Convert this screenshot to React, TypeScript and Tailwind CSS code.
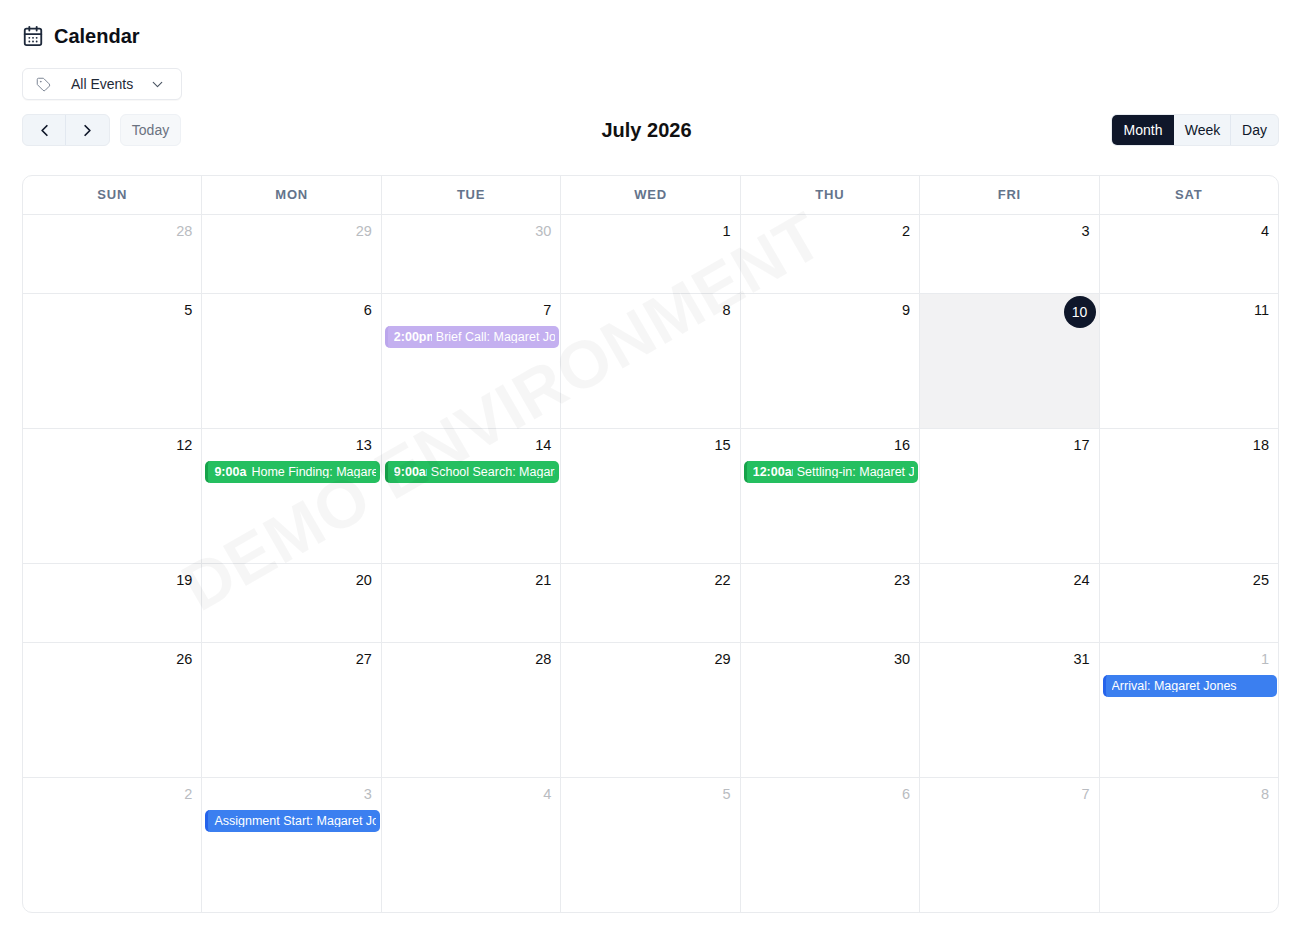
import { CalendarDays, ChevronDown, ChevronLeft, ChevronRight, Tag } from 'lucide-react';

type CalEvent = { time?: string; timeWidth?: string; title: string; tone: 'purple' | 'green' | 'blue' };
type Day = { n: number; muted?: boolean; today?: boolean; event?: CalEvent };

const headers = ['SUN', 'MON', 'TUE', 'WED', 'THU', 'FRI', 'SAT'];

const weeks: { height: string; days: Day[] }[] = [
  { height: 'h-[79px]', days: [{ n: 28, muted: true }, { n: 29, muted: true }, { n: 30, muted: true }, { n: 1 }, { n: 2 }, { n: 3 }, { n: 4 }] },
  {
    height: 'h-[135px]',
    days: [
      { n: 5 },
      { n: 6 },
      { n: 7, event: { time: '2:00pm', timeWidth: 'w-[38px]', title: 'Brief Call: Magaret Jones', tone: 'purple' } },
      { n: 8 },
      { n: 9 },
      { n: 10, today: true },
      { n: 11 },
    ],
  },
  {
    height: 'h-[135px]',
    days: [
      { n: 12 },
      { n: 13, event: { time: '9:00am', timeWidth: 'w-[33px]', title: 'Home Finding: Magaret Jones', tone: 'green' } },
      { n: 14, event: { time: '9:00am', timeWidth: 'w-[33px]', title: 'School Search: Magaret Jones', tone: 'green' } },
      { n: 15 },
      { n: 16, event: { time: '12:00am', timeWidth: 'w-[40px]', title: 'Settling-in: Magaret Jones', tone: 'green' } },
      { n: 17 },
      { n: 18 },
    ],
  },
  { height: 'h-[79px]', days: [{ n: 19 }, { n: 20 }, { n: 21 }, { n: 22 }, { n: 23 }, { n: 24 }, { n: 25 }] },
  {
    height: 'h-[135px]',
    days: [
      { n: 26 },
      { n: 27 },
      { n: 28 },
      { n: 29 },
      { n: 30 },
      { n: 31 },
      { n: 1, muted: true, event: { title: 'Arrival: Magaret Jones', tone: 'blue' } },
    ],
  },
  {
    height: 'h-[134px]',
    days: [
      { n: 2, muted: true },
      { n: 3, muted: true, event: { title: 'Assignment Start: Magaret Jones', tone: 'blue' } },
      { n: 4, muted: true },
      { n: 5, muted: true },
      { n: 6, muted: true },
      { n: 7, muted: true },
      { n: 8, muted: true },
    ],
  },
];

const toneClass = {
  purple: 'bg-[#c4b0f0] border-[#bba6ec] text-white',
  green: 'bg-[#25bf60] border-[#16a34a] text-white',
  blue: 'bg-[#3b7ff0] border-[#2563eb] text-white',
};

function EventChip({ event }: { event: CalEvent }) {
  return (
    <div className={`ml-[3px] mr-[1px] mt-[7px] flex h-[22px] items-center overflow-hidden rounded-[5px] border-l-[3px] pl-[6px] pr-[4px] text-[12.5px] leading-none whitespace-nowrap ${toneClass[event.tone]}`}>
      <div className="flex min-w-0 flex-1 overflow-hidden">
        {event.time && <span className={`mr-[4px] shrink-0 overflow-hidden font-bold ${event.timeWidth}`}>{event.time}</span>}
        <span className="overflow-hidden">{event.title}</span>
      </div>
    </div>
  );
}

function DayCell({ day, last }: { day: Day; last: boolean }) {
  return (
    <div className={`min-w-0 flex-1 ${last ? '' : 'border-r border-[#e9ebee]'} ${day.today ? 'bg-[#f2f2f3]' : ''}`}>
      {day.today ? (
        <div className="flex justify-end pr-[3px] pt-[2px]">
          <span className="flex h-8 w-8 items-center justify-center rounded-full bg-[#0f172a] text-sm text-white">{day.n}</span>
        </div>
      ) : (
        <div className={`h-[25px] pr-[9px] pt-[8px] text-right text-[14.5px] leading-[17px] ${day.muted ? 'text-[#b9bcc1]' : 'text-[#111111]'}`}>{day.n}</div>
      )}
      {day.event && <EventChip event={day.event} />}
    </div>
  );
}

export default function App() {
  return (
    <div className="relative h-[931px] overflow-hidden bg-white pl-[22px] pr-[21px] pt-[24px] font-['Liberation_Sans',sans-serif] text-[#0f172a]">
      <div className="flex h-[23px] items-center gap-[10px]">
        <CalendarDays size={22} strokeWidth={2} className="shrink-0 text-[#1e293b]" />
        <h1 className="text-xl font-bold leading-none text-[#0c0f16]">Calendar</h1>
      </div>

      <button className="mt-[21px] flex h-8 w-[160px] items-center rounded-md border border-[#e8eaee] bg-white pl-[13px] text-sm text-[#1f2937] shadow-[0_1px_1px_rgba(0,0,0,0.03)]">
        <Tag size={15} strokeWidth={1.6} className="text-[#7c8594]" />
        <span className="ml-[20px]">All Events</span>
        <ChevronDown size={17} strokeWidth={1.6} className="ml-[16px] text-[#4b5563]" />
      </button>

      <div className="relative mt-[14px] flex h-8 items-center justify-between">
        <div className="flex items-center gap-[10px]">
          <div className="flex h-8 overflow-hidden rounded-md border border-[#e8ecf1] bg-[#f1f5f9]">
            <button className="flex w-[43px] items-center justify-center border-r border-[#e2e8f0] text-[#0f172a]">
              <ChevronLeft size={19} strokeWidth={2.2} />
            </button>
            <button className="flex w-[43px] items-center justify-center text-[#0f172a]">
              <ChevronRight size={19} strokeWidth={2.2} />
            </button>
          </div>
          <button className="flex h-8 w-[61px] items-center justify-center rounded-md border border-[#eef1f5] bg-[#f6f8fa] text-sm text-[#6b7280]">Today</button>
        </div>
        <h2 className="absolute left-0 right-[8px] text-center text-xl font-bold leading-none text-[#111111]">July 2026</h2>
        <div className="flex h-8 overflow-hidden rounded-md border border-[#e8ecf1] bg-[#f1f5f9] text-sm text-[#0f172a]">
          <button className="w-[62px] bg-[#0f172a] text-white">Month</button>
          <button className="w-[57px] border-r border-[#e2e8f0] pl-[1px]">Week</button>
          <button className="w-[47px]">Day</button>
        </div>
      </div>

      <div className="relative mt-[29px] overflow-hidden rounded-[10px] border border-[#e9ebee]">
        <div className="flex h-[39px] border-b border-[#e9ebee]">
          {headers.map((h, i) => (
            <div key={h} className={`flex flex-1 items-center justify-center text-[13px] font-bold tracking-[0.06em] text-[#64748b] ${i < 6 ? 'border-r border-[#e9ebee]' : ''}`}>{h}</div>
          ))}
        </div>
        {weeks.map((week, i) => (
          <div key={i} className={`flex ${week.height} ${i < weeks.length - 1 ? 'border-b border-[#e9ebee]' : ''}`}>
            {week.days.map((day, j) => (
              <DayCell key={j} day={day} last={j === 6} />
            ))}
          </div>
        ))}
      </div>

      <div className="pointer-events-none absolute left-[502px] top-[411px] -translate-x-1/2 -translate-y-1/2 -rotate-[30deg] whitespace-nowrap text-[67px] font-bold leading-none tracking-[0.01em] text-black/[0.035]">
        DEMO ENVIRONMENT
      </div>
    </div>
  );
}
